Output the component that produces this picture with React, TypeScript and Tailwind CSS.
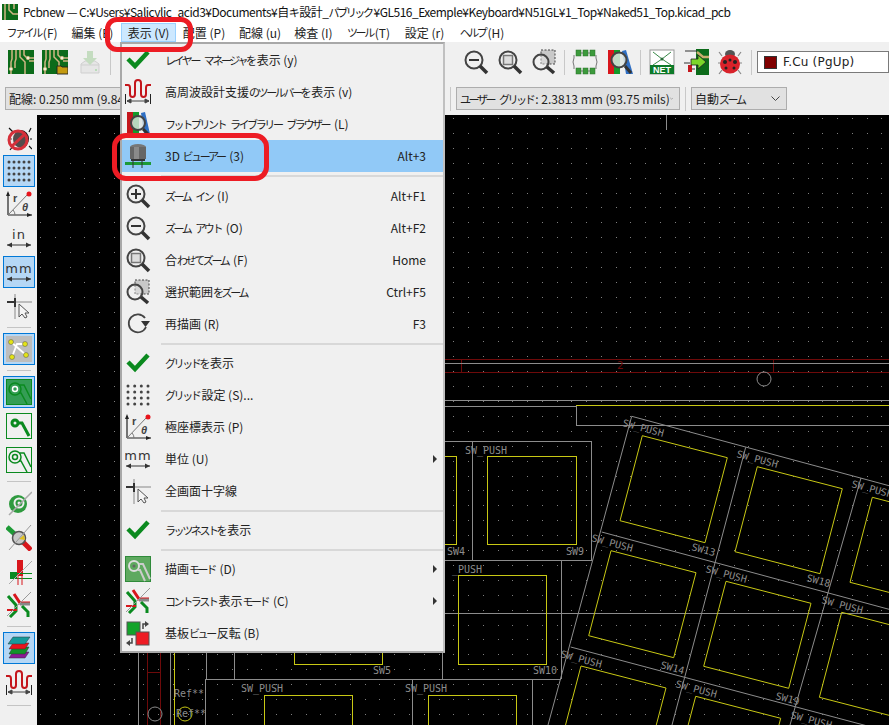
import type { ReactNode } from "react";

const FONT = "[font-family:'Noto_Sans_CJK_JP','Noto_Sans',sans-serif]";

// the kana in the original UI font is much narrower than the kanji
function Jp({ text }: { text: string }) {
  return (
    <>
      {text.split(/([\u3040-\u30ff]+)/).map((part, i) =>
        i % 2 === 1 ? (
          <span key={i} className="text-[11px] tracking-[-2.400px] pr-[2px]">
            {part}
          </span>
        ) : (
          <span key={i}>{part}</span>
        )
      )}
    </>
  );
}

function Ico({ s = 26, children }: { s?: number; children: ReactNode }) {
  return (
    <svg width={s} height={s} viewBox="0 0 26 26" className="block shrink-0">
      {children}
    </svg>
  );
}

const Check = () => (
  <Ico>
    <polyline points="3,12 10,19 23,5" fill="none" stroke="#0b8a1f" strokeWidth="4.500" />
  </Ico>
);

const Tune = () => (
  <Ico>
    <path d="M0 6h3q2 0 2 3v6q0 3 2.500 3t2.500-3V4q0-3 3-3t3 3v11q0 3 2.500 3t2.500-3V9q0-3 2-3h3" fill="none" stroke="#c4161c" strokeWidth="2" />
    <path d="M0.500 15v10M25.500 15v10" stroke="#222" strokeWidth="1" />
    <path d="M2 22h22M2 22l4-2v4zM24 22l-4-2v4z" stroke="#444" strokeWidth="1" fill="#444" />
  </Ico>
);

function Glass({ children }: { children?: ReactNode }) {
  return (
    <Ico>
      <circle cx="11" cy="11" r="8.500" fill="none" stroke="#444" strokeWidth="2" />
      <path d="M17 17l7 7" stroke="#333" strokeWidth="3.500" />
      {children}
    </Ico>
  );
}

const ZoomIn = () => (
  <Glass>
    <path d="M6 11h10M11 6v10" stroke="#333" strokeWidth="2" />
  </Glass>
);
const ZoomOut = () => (
  <Glass>
    <path d="M6 11h10" stroke="#333" strokeWidth="2" />
  </Glass>
);
const ZoomFit = () => (
  <Glass>
    <rect x="6.500" y="6.500" width="9" height="9" fill="#ddd" stroke="#777" strokeWidth="1.500" />
  </Glass>
);
const ZoomSel = () => (
  <Ico>
    <rect x="10" y="1" width="14" height="14" fill="#c8c8c8" stroke="#444" strokeDasharray="2 1.500" />
    <circle cx="10" cy="13" r="7.500" fill="#f0f0f0" fillOpacity="0.4" stroke="#444" strokeWidth="2" />
    <path d="M16 18l7 6" stroke="#333" strokeWidth="3.500" />
  </Ico>
);

const Library = () => (
  <Ico>
    <rect x="2" y="1" width="6" height="22" fill="#c4161c" />
    <rect x="8" y="1" width="6" height="22" fill="#149a2a" />
    <path d="M16 2l4-1 5 22h-6z" fill="#2f6fc4" />
    <circle cx="13" cy="12" r="7" fill="#dfe6e2" fillOpacity="0.8" stroke="#444" strokeWidth="2" />
    <path d="M18 18l6 6" stroke="#333" strokeWidth="3" />
  </Ico>
);

const Viewer3D = () => (
  <Ico>
    <ellipse cx="13" cy="4" rx="8" ry="3" fill="#777" />
    <rect x="5" y="4" width="16" height="12" fill="#666" />
    <rect x="9" y="4" width="5" height="12" fill="#8a8a8a" />
    <rect x="6" y="16" width="14" height="2" fill="#333" />
    <rect x="0" y="19" width="26" height="3" fill="#1d9a36" />
    <path d="M8 18v7M17 18v7" stroke="#333" strokeWidth="1" />
  </Ico>
);

const Redraw = () => (
  <Ico>
    <path d="M20 7A9 9 0 1 0 21 16" fill="none" stroke="#444" strokeWidth="1.800" />
    <path d="M16 10h9l-4.500 6z" fill="#333" />
  </Ico>
);

function Dots({ cols, rows }: { cols: number; rows: number }) {
  const items = [];
  for (let c = 0; c < cols; c++) {
    for (let r = 0; r < rows; r++) {
      items.push(
        <circle
          key={c + "-" + r}
          cx={3 + (c * 20) / (cols - 1)}
          cy={4 + (r * 18) / (rows - 1)}
          r="1.500"
          fill="#444"
        />
      );
    }
  }
  return <Ico>{items}</Ico>;
}

const Polar = () => (
  <Ico>
    <path d="M2 24V2M2 24h24" stroke="#222" strokeWidth="1.200" />
    <path d="M2 0l-2 5h4zM26 24l-5-2v4z" fill="#222" />
    <path d="M2 24L22 3" stroke="#777" strokeWidth="1" />
    <path d="M9 24a7 7 0 0 0-2-5" fill="none" stroke="#777" />
    <circle cx="23" cy="3" r="2.500" fill="#e8141c" />
    <text x="7" y="11" fontSize="11" fontWeight="700" fill="#444" fontFamily="'Liberation Sans',sans-serif">r</text>
    <text x="16" y="20" fontSize="11" fontWeight="700" fontStyle="italic" fill="#444" fontFamily="'Liberation Sans',sans-serif">θ</text>
  </Ico>
);

function Unit({ label }: { label: string }) {
  return (
    <Ico>
      <text x="13" y="14" textAnchor="middle" fontSize="13" letterSpacing="1" fill="#333" fontFamily="'DejaVu Sans',sans-serif">
        {label}
      </text>
      <path d="M1 20h24" stroke="#333" strokeWidth="1" />
      <path d="M1 20l5-2.500v5zM25 20l-5-2.500v5z" fill="#333" />
    </Ico>
  );
}

const Cursor = () => (
  <Ico>
    <path d="M1 9h9" stroke="#333" strokeWidth="2" />
    <path d="M10 9h16M9 1v5M9 13v13" stroke="#aaa" strokeWidth="1.500" />
    <path d="M9 5v9" stroke="#333" strokeWidth="2" />
    <path d="M13 11v13l3-3 3 4 2-1-2-4h4z" fill="#f5f5f5" stroke="#555" strokeWidth="1" />
  </Ico>
);

const Ratsnest = () => (
  <Ico>
    <rect width="26" height="26" fill="#bdbdbd" />
    <path d="M5 6l15 13M20 8H11L6 21" stroke="#fff" strokeWidth="1.800" fill="none" />
    <circle cx="5" cy="6" r="2.500" fill="#e4e415" stroke="#555" strokeWidth="0.500" />
    <circle cx="19" cy="8" r="2.500" fill="#e4e415" stroke="#555" strokeWidth="0.500" />
    <circle cx="6" cy="21" r="2.500" fill="#e4e415" stroke="#555" strokeWidth="0.500" />
    <circle cx="20" cy="19" r="2.500" fill="#e4e415" stroke="#555" strokeWidth="0.500" />
  </Ico>
);

function Track({ mode, color = "#0a8a1f" }: { mode: "filled" | "plain" | "outline"; color?: string }) {
  return (
    <Ico>
      <rect x="0.500" y="0.500" width="25" height="25" fill={mode === "filled" ? color : "none"} fillOpacity="0.75" stroke={color} />
      {mode === "plain" ? (
        <>
          <circle cx="9" cy="10" r="3" fill="none" stroke={color} strokeWidth="3" />
          <path d="M12 10h4l7 13" fill="none" stroke={color} strokeWidth="3" />
        </>
      ) : (
        <>
          <circle cx="9" cy="10" r="6" fill="none" stroke="#0a8a1f" strokeWidth="1.500" />
          <circle cx="9" cy="10" r="2.500" fill="none" stroke={mode === "filled" ? "#fff" : "#0a8a1f"} strokeWidth="1.500" />
          <path d="M14 6h4l7 14M13 14h2l6 11" fill="none" stroke="#0a8a1f" strokeWidth="1.500" />
        </>
      )}
    </Ico>
  );
}

const DrawMode = () => (
  <Ico>
    <rect x="0.500" y="0.500" width="25" height="25" fill="#5ea95f" stroke="#2f8a3a" />
    <circle cx="9" cy="10" r="5" fill="none" stroke="#ddd" strokeWidth="2" />
    <circle cx="9" cy="10" r="1.500" fill="#666" />
    <path d="M14 8h4l7 15M13 14h2l5 11" fill="none" stroke="#ccc" strokeWidth="2" />
  </Ico>
);

const Contrast = () => (
  <Ico>
    <path d="M2 4l8 9v6l-6 6" fill="none" stroke="#0a8a1f" strokeWidth="3" />
    <path d="M8 2l6 9h10" fill="none" stroke="#d8161c" strokeWidth="3" />
    <path d="M14 12h10" stroke="#888" strokeWidth="3" />
    <path d="M16 14l6 6v5" fill="none" stroke="#0a8a1f" strokeWidth="3" />
    <path d="M1 18h10" stroke="#d8161c" strokeWidth="2" />
    <path d="M25 0L1 24" stroke="#999" strokeWidth="1" />
  </Ico>
);

const Flip = () => (
  <Ico>
    <rect x="2" y="2" width="13" height="13" fill="#12a32a" stroke="#555" />
    <rect x="11" y="12" width="13" height="13" fill="#ee1c24" stroke="#555" />
    <path d="M18 9V4h2" fill="none" stroke="#444" strokeWidth="1.500" />
    <path d="M20 1l4 3-4 3z" fill="#444" />
    <path d="M7 18v5H5" fill="none" stroke="#444" strokeWidth="1.500" />
    <path d="M5 20l-4 3 4 3z" fill="#444" />
  </Ico>
);

const BugOff = () => (
  <Ico>
    <ellipse cx="15" cy="13" rx="8" ry="9" fill="#111" />
    <path d="M7 6L3 2M23 6l2-4M7 20l-3 4M23 20l3 3M6 13H2M24 13h2" stroke="#111" strokeWidth="1.200" />
    <circle cx="12" cy="14" r="9" fill="#f3d5d5" fillOpacity="0.3" stroke="#d6303a" strokeWidth="3" />
    <path d="M6 20L19 8" stroke="#d6303a" strokeWidth="3" />
  </Ico>
);

const Via = () => (
  <Ico>
    <circle cx="12" cy="14" r="9" fill="#2f9a3f" />
    <circle cx="13" cy="13" r="5.500" fill="#eee" />
    <circle cx="13" cy="13" r="3.500" fill="#2f9a3f" />
    <circle cx="13" cy="13" r="1.500" fill="#eee" />
    <path d="M26 2L3 25" stroke="#aaa" strokeWidth="1.500" />
  </Ico>
);

const PadCross = () => (
  <Ico>
    <path d="M1 2l12 11" stroke="#1d9a36" strokeWidth="5" />
    <path d="M13 13l12 12" stroke="#d8161c" strokeWidth="5" />
    <circle cx="13" cy="13" r="6.500" fill="#c8c8c8" stroke="#555" strokeWidth="1.500" />
    <path d="M13 14l5-4 1 5z" fill="#e0c020" />
    <path d="M25 0L3 25" stroke="#999" strokeWidth="1" />
  </Ico>
);

const NetClr = () => (
  <Ico>
    <rect x="11" y="1" width="6" height="16" fill="#d8161c" />
    <rect x="4" y="13" width="7" height="6" fill="#0a8a1f" />
    <path d="M11 14.500h15M4 19.500h22" stroke="#0a8a1f" strokeWidth="1" />
    <path d="M12 17v9M16 17v9" stroke="#d8161c" strokeWidth="1" />
    <path d="M26 2L3 25" stroke="#aaa" strokeWidth="1" />
  </Ico>
);

const Layers = () => (
  <Ico>
    <path d="M7 17h16l-4 6H3z" fill="#8a1a96" stroke="#333" strokeWidth="0.500" />
    <path d="M7 12h16l-4 7H3z" fill="#12932a" stroke="#333" strokeWidth="0.500" />
    <path d="M7 8h16l-4 6H3z" fill="#e8141c" stroke="#333" strokeWidth="0.500" />
    <path d="M7 2h17l-5 7H2z" fill="#169a9a" stroke="#333" strokeWidth="0.500" />
  </Ico>
);

function PcbIcon({ folder }: { folder?: boolean }) {
  return (
    <Ico>
      <rect x="0" y="1" width="26" height="24" fill="#0c6b1a" />
      <path d="M4 1v9l-1 3v12M8 1v9l-1 3v6M12 1v7l5 5v12M16 1v5l3 3h7M21 12h5" stroke="#d0b784" strokeWidth="1.500" fill="none" />
      <circle cx="20" cy="9" r="1.700" fill="#eef0d8" stroke="#d0b784" strokeWidth="0.800" />
      <circle cx="3" cy="20" r="1.700" fill="#eef0d8" stroke="#d0b784" strokeWidth="0.800" />
      {folder ? <path d="M15 17h4l1 1h6v7H15z" fill="#c49a10" stroke="#222" strokeWidth="0.900" /> : null}
    </Ico>
  );
}

const SaveOff = () => (
  <Ico>
    <path d="M4 15L8 12h10l4 3v9H4z" fill="#e6e6e6" stroke="#cfcfcf" />
    <path d="M4 16h18" stroke="#cfcfcf" />
    <circle cx="19" cy="21" r="1" fill="#a8d8a8" />
    <path d="M10 2h6v7h4l-7 7-7-7h4z" fill="#c4dcc0" />
  </Ico>
);

const Chip = () => (
  <Ico>
    <path d="M2 6v3l-1 4 1 4v3M24 6v3l1 4-1 4v3M4 4h18M4 22h18" fill="none" stroke="#777" strokeWidth="1" />
    {[3, 10, 17].map((x) => (
      <g key={x}>
        <rect x={x + 1} y="1" width="5" height="6" fill="#3c9a3c" stroke="#2a702a" strokeWidth="0.500" />
        <rect x={x + 1} y="19" width="5" height="6" fill="#3c9a3c" stroke="#2a702a" strokeWidth="0.500" />
      </g>
    ))}
  </Ico>
);

const NetBox = () => (
  <Ico>
    <rect x="1" y="1" width="24" height="24" fill="#fff" stroke="#999" />
    <path d="M4 3l9 7-9 6M22 3l-9 7 9 6" fill="none" stroke="#3a8a4a" strokeWidth="1" />
    <circle cx="13" cy="10" r="1.500" fill="#2a6a3a" />
    <rect x="1" y="16" width="24" height="9" fill="#0c7a28" />
    <text x="13" y="24" textAnchor="middle" fontSize="9" fontWeight="700" fill="#fff" fontFamily="'Liberation Sans',sans-serif">NET</text>
  </Ico>
);

const Update = () => (
  <Ico>
    <rect x="13" y="0" width="13" height="26" fill="#0c6b1a" />
    <path d="M14 3l6 5h6" stroke="#c8ad6e" strokeWidth="2.500" fill="none" />
    <path d="M2 2h12M1 14h6M6 20h6" stroke="#333" />
    <rect x="5" y="16" width="4" height="7" fill="#c4161c" />
    <path d="M8 10h7V6l8 7-8 7v-4H8z" fill="#7bd62a" stroke="#222" strokeWidth="0.800" />
  </Ico>
);

const Ladybug = () => (
  <Ico>
    <path d="M5 7L2 3M21 7l3-4M4 14H1M22 14h3M5 21l-3 4M21 21l3 4" stroke="#888" strokeWidth="1.200" />
    <ellipse cx="13" cy="5" rx="5" ry="4" fill="#555" />
    <ellipse cx="13" cy="15" rx="10" ry="9.500" fill="#d8222a" />
    <circle cx="8" cy="13" r="2" fill="#222" />
    <circle cx="18" cy="13" r="2" fill="#222" />
    <circle cx="13" cy="11" r="1.500" fill="#222" />
    <circle cx="9" cy="19" r="1.500" fill="#222" />
    <circle cx="17" cy="19" r="1.500" fill="#222" />
  </Ico>
);

const LibSearch = () => (
  <Ico>
    <rect x="1" y="1" width="6" height="24" fill="#d8161c" />
    <rect x="7" y="1" width="6" height="24" fill="#149a2a" />
    <path d="M15 2l4-1 7 24h-7z" fill="#2f6fc4" />
    <circle cx="12" cy="11" r="7.500" fill="#dfe6e2" fillOpacity="0.85" stroke="#444" strokeWidth="2" />
    <path d="M18 17l6 7" stroke="#333" strokeWidth="3" />
  </Ico>
);

type MenuRow =
  | { sep: string }
  | { icon: ReactNode; label: string; key?: string; arrow?: boolean; active?: boolean };

const menuRows: MenuRow[] = [
  { icon: <Check />, label: "レイヤー マネージャを表示 (y)" },
  { icon: <Tune />, label: "高周波設計支援のツールバーを表示 (v)" },
  { icon: <Library />, label: "フットプリント ライブラリー ブラウザー (L)" },
  { icon: <Viewer3D />, label: "3D ビューアー (3)", key: "Alt+3", active: true },
  { sep: "h-[8px]" },
  { icon: <ZoomIn />, label: "ズーム イン (I)", key: "Alt+F1" },
  { icon: <ZoomOut />, label: "ズーム アウト (O)", key: "Alt+F2" },
  { icon: <ZoomFit />, label: "合わせてズーム (F)", key: "Home" },
  { icon: <ZoomSel />, label: "選択範囲をズーム", key: "Ctrl+F5" },
  { icon: <Redraw />, label: "再描画 (R)", key: "F3" },
  { sep: "h-[7px]" },
  { icon: <Check />, label: "グリッドを表示" },
  { icon: <Dots cols={4} rows={4} />, label: "グリッド設定 (S)..." },
  { icon: <Polar />, label: "極座標表示 (P)" },
  { icon: <Unit label="mm" />, label: "単位 (U)", arrow: true },
  { icon: <Cursor />, label: "全画面十字線" },
  { sep: "h-[7px]" },
  { icon: <Check />, label: "ラッツネストを表示" },
  { sep: "h-[7px]" },
  { icon: <DrawMode />, label: "描画モード (D)", arrow: true },
  { icon: <Contrast />, label: "コントラスト表示モード (C)", arrow: true },
  { icon: <Flip />, label: "基板ビュー反転 (B)" },
];

function ViewMenu() {
  return (
    <div className={`absolute left-[120px] top-[42px] w-[325px] h-[611px] bg-[#f0f0f0] border-2 border-[#a8a8a8] border-r-[#c0c0c0] text-[12px] text-[#222] ${FONT}`}>
      {menuRows.map((row, i) =>
        "sep" in row ? (
          <div key={i} className={`${row.sep} pl-[39px] flex items-center`}>
            <div className="w-full h-[2px] bg-[#d8d8d8]" />
          </div>
        ) : (
          <div
            key={i}
            className={`h-[32px] flex items-center pl-[3px] ${row.active ? "bg-[#91c9f7]" : ""}`}
          >
            <div className="w-[26px] mr-[14px]">{row.icon}</div>
            <span className="flex-1 whitespace-nowrap"><Jp text={row.label} /></span>
            {row.key ? <span className="pr-[17px]">{row.key}</span> : null}
            {row.arrow ? <span className="mr-[6px] w-0 h-0 border-y-[4px] border-y-transparent border-l-[4px] border-l-[#333]" /> : null}
          </div>
        )
      )}
    </div>
  );
}

const menuBar = [
  { label: "ファイル (F)", w: "w-[64px]" },
  { label: "編集 (E)", w: "w-[57px]" },
  { label: "表示 (V)", w: "w-[55px]", open: true },
  { label: "配置 (P)", w: "w-[56px]" },
  { label: "配線 (u)", w: "w-[56px]" },
  { label: "検査 (I)", w: "w-[51px]" },
  { label: "ツール (T)", w: "w-[59px]" },
  { label: "設定 (r)", w: "w-[53px]" },
  { label: "ヘルプ (H)", w: "w-[62px]" },
];

function TopBars() {
  return (
    <>
      <div className={`h-[23px] bg-white flex items-center pl-[2px] gap-[5px] text-[12px] text-[#111] ${FONT}`}>
        <svg width="16" height="16" viewBox="0 0 16 16">
          <rect width="16" height="16" fill="#0c6b1a" />
          <path d="M3 0v16M7 0v6l4 4h5M12 0v5" stroke="#d0b784" strokeWidth="1.500" fill="none" />
        </svg>
        <span className="whitespace-nowrap tracking-[-0.500px]">
          <Jp text="Pcbnew — C:¥Users¥Salicylic_acid3¥Documents¥自キ設計_パブリック¥GL516_Exemple¥Keyboard¥N51GL¥1_Top¥Naked51_Top.kicad_pcb" />
        </span>
      </div>
      <div className={`h-[19px] bg-white flex items-center text-[12px] text-[#222] ${FONT}`}>
        {menuBar.map((m) => (
          <div
            key={m.label}
            className={`${m.w} h-[19px] flex items-center justify-center whitespace-nowrap border ${m.open ? "bg-[#cce8ff] border-[#99d1ff]" : "border-transparent"}`}
          >
            <Jp text={m.label} />
          </div>
        ))}
      </div>
      <div className="h-[40px] bg-[#f0f0f0] flex items-center pl-[8px]">
        <PcbIcon />
        <div className="ml-[8px]"><PcbIcon folder /></div>
        <div className="ml-[9px]"><SaveOff /></div>
        <div className="ml-[7px] w-[1px] h-[25px] bg-[#c8c8c8]" />
        <div className="ml-[352px]"><ZoomOut /></div>
        <div className="ml-[8px]"><ZoomFit /></div>
        <div className="ml-[8px]"><ZoomSel /></div>
        <div className="ml-[7px] w-[1px] h-[25px] bg-[#c8c8c8]" />
        <div className="ml-[7px]"><Chip /></div>
        <div className="ml-[9px]"><LibSearch /></div>
        <div className="ml-[7px] w-[1px] h-[25px] bg-[#c8c8c8]" />
        <div className="ml-[8px]"><NetBox /></div>
        <div className="ml-[8px]"><Update /></div>
        <div className="ml-[8px]"><Ladybug /></div>
        <div className="ml-[8px] w-[1px] h-[25px] bg-[#c8c8c8]" />
        <div className={`ml-[5px] flex-1 h-[22px] bg-white border border-[#7a7a7a] flex items-center pl-[6px] text-[12px] text-[#222] ${FONT}`}>
          <span className="w-[13px] h-[13px] bg-[#800000] border border-[#333] mr-[6px]" />
          <span className="font-['DejaVu_Sans'] tracking-[0.2px] text-[12px]">F.Cu (PgUp)</span>
        </div>
      </div>
      <div className={`h-[33px] bg-[#f0f0f0] flex items-center pl-[5px] text-[12px] text-[#222] ${FONT}`}>
        <div className="w-[160px] h-[23px] bg-[#e1e1e1] border border-[#adadad] flex items-center pl-[3px] whitespace-nowrap">
          配線: 0.250 mm (9.84 mils)
        </div>
        <div className="ml-[285px] w-[1px] h-[24px] bg-[#c8c8c8]" />
        <Combo className="ml-[5px] w-[224px]" label="ユーザー グリッド: 2.3813 mm (93.75 mils)" />
        <div className="ml-[5px] w-[1px] h-[24px] bg-[#c8c8c8]" />
        <Combo className="ml-[5px] w-[96px]" label="自動ズーム" />
      </div>
    </>
  );
}

function Combo({ className, label }: { className: string; label: string }) {
  return (
    <div className={`${className} h-[23px] bg-[#e1e1e1] border border-[#adadad] flex items-center justify-between pl-[3px] pr-[6px] whitespace-nowrap`}>
      <span><Jp text={label} /></span>
      <svg width="9" height="5" viewBox="0 0 9 5">
        <path d="M0.500 0.500l4 4 4-4" fill="none" stroke="#444" />
      </svg>
    </div>
  );
}

function ToolBtn({ h, on, children }: { h: string; on?: boolean; children: ReactNode }) {
  return (
    <div className={`${h} flex items-center justify-center`}>
      <div className={`w-[32px] h-[32px] flex items-center justify-center ${on ? "bg-[#b5d7f5] border border-[#0078d7]" : ""}`}>
        {children}
      </div>
    </div>
  );
}

const ToolSep = ({ h }: { h: string }) => (
  <div className={`${h} flex items-center justify-center`}>
    <div className="w-[24px] h-[1px] bg-[#c4c4c4]" />
  </div>
);

function LeftBar() {
  return (
    <div className="w-[37px] shrink-0 bg-[#f0f0f0] flex flex-col pt-[8px]">
      <ToolBtn h="h-[31px]"><BugOff /></ToolBtn>
      <ToolBtn h="h-[33px]" on><Dots cols={5} rows={4} /></ToolBtn>
      <ToolBtn h="h-[33px]"><Polar /></ToolBtn>
      <ToolBtn h="h-[35px]"><Unit label="in" /></ToolBtn>
      <ToolBtn h="h-[34px]" on><Unit label="mm" /></ToolBtn>
      <ToolBtn h="h-[34px]"><Cursor /></ToolBtn>
      <ToolSep h="h-[9px]" />
      <ToolBtn h="h-[34px]" on><Ratsnest /></ToolBtn>
      <ToolSep h="h-[9px]" />
      <ToolBtn h="h-[34px]" on><Track mode="filled" /></ToolBtn>
      <ToolBtn h="h-[34px]"><Track mode="plain" /></ToolBtn>
      <ToolBtn h="h-[34px]"><Track mode="outline" /></ToolBtn>
      <ToolSep h="h-[8px]" />
      <ToolBtn h="h-[35px]"><Via /></ToolBtn>
      <ToolBtn h="h-[35px]"><PadCross /></ToolBtn>
      <ToolBtn h="h-[33px]"><NetClr /></ToolBtn>
      <ToolBtn h="h-[34px]"><Contrast /></ToolBtn>
      <ToolSep h="h-[9px]" />
      <ToolBtn h="h-[33px]" on><Layers /></ToolBtn>
      <ToolBtn h="h-[38px]"><Tune /></ToolBtn>
      <ToolSep h="h-[6px]" />
    </div>
  );
}

let gridPath = "";
for (let x = 40; x < 889; x += 14.76) {
  for (let y = 118; y < 725; y += 14.9) {
    gridPath += `M${Math.round(x)} ${Math.round(y)}h1v1h-1z`;
  }
}

const keyOrigins = [
  [642.3, 435.7], [757.3, 466.7], [872.3, 497.3],
  [611, 550.7], [726, 581.3], [841.7, 612.3],
  [581, 666], [695.7, 696.3],
];

const tilted = [
  ["SW_PUSH", 622, 426], ["SW_PUSH", 736, 457], ["SW_PUSH", 851, 487],
  ["SW_PUSH", 591, 541], ["SW_PUSH", 705, 572], ["SW_PUSH", 821, 603],
  ["SW_PUSH", 560, 657], ["SW_PUSH", 675, 687], ["SW_PUSH", 790, 718],
  ["SW13", 691, 550], ["SW18", 806, 581], ["SW14", 660, 668], ["SW19", 775, 699],
] as const;

const straight = [
  ["SW_PUSH", 465, 454], ["SW4", 447, 555], ["SW9", 566, 555],
  ["_PUSH", 452, 573], ["SW10", 533, 674], ["SW5", 373, 674],
  ["SW_PUSH", 241, 692], ["SW_PUSH", 405, 692],
  ["Ref**", 174, 697], ["Ref**", 176, 717],
] as const;

const G = "#8c8c8c";
const Y = "#c8c814";
const R = "#6e0a0a";

function Board() {
  return (
    <svg viewBox="37 115 852 610" className="block w-full h-full" fontFamily="'DejaVu Sans Mono',monospace" fontSize="10" fill="#8c8c8c">
      <path d={gridPath} fill="#808080" shapeRendering="crispEdges" />
      <g fill="none" shapeRendering="crispEdges" strokeWidth="1">
        <path stroke={R} d="M400 359.500H889M400 372.500H889M461 359v13M773 359v13" />
        <path stroke={G} d="M400 363.500H889M400 400.500H889M400 406.500H576.500V425.500H889M666.500 115V130" />
        <path stroke={G} d="M444 441.500H591.500V560.500H444M472.500 441V560M561.500 560V679M444 679.500H561M400 613.500H889" />
        <path stroke={Y} d="M576 405.500H889" />
        <path stroke={Y} d="M400 456.500H456.500V544.500H400M487.500 456.500H576.500V544.500H487.500ZM458.500 575.500H546.500V664.500H458.500Z" />
        <path stroke={G} d="M138.500 652V725M170.500 652V725M206.500 652V679M234.500 652V679M442.500 652V679M205.500 679.500H561M205.500 679V725M412.500 679V725M532.500 679V725" />
        <path stroke={Y} d="M174.500 652V725M294.500 652V664.500H382.500V652M264.500 725V695.500H352.500V725M428.500 725V695.500H516.500V725" />
        <path stroke={R} d="M147.500 652V725M160.500 652V725M147 672.500H160" />
      </g>
      <g fill="none" strokeWidth="1">
        <path stroke={G} d="M631.700 416.300L889 485.700M601.700 532L889 609.300M570.700 647L889 731.700M631.700 416.300L548 725M745.700 447.300L672 725M861 478L790 725" />
        {keyOrigins.map(([x, y]) => (
          <path
            key={x}
            stroke={Y}
            d={`M${x} ${y}l85 22l-22.300 85l-85 -22z`}
          />
        ))}
        <circle cx="764" cy="379" r="7" stroke={G} />
        <circle cx="155" cy="714" r="7" stroke={G} />
        <circle cx="185" cy="714" r="7" stroke={Y} />
      </g>
      <text x="617" y="369" fill={R} fontSize="11">2</text>
      {straight.map(([t, x, y]) => (
        <text key={t + x} x={x} y={y}>{t}</text>
      ))}
      {tilted.map(([t, x, y]) => (
        <text key={t + x} x={x} y={y} transform={`rotate(15 ${x} ${y})`}>{t}</text>
      ))}
    </svg>
  );
}

export default function App() {
  return (
    <div className="relative w-[889px] h-[725px] overflow-hidden flex flex-col bg-[#f0f0f0]">
      <TopBars />
      <div className="flex flex-1 min-h-0">
        <LeftBar />
        <div className="flex-1 bg-black min-w-0">
          <Board />
        </div>
      </div>
      <ViewMenu />
      <div className="absolute left-[105px] top-[17px] w-[88px] h-[35px] border-[5px] border-[#ed1c24] rounded-[12px]" />
      <div className="absolute left-[112px] top-[133px] w-[157px] h-[48px] border-[5px] border-[#ed1c24] rounded-[14px]" />
    </div>
  );
}
